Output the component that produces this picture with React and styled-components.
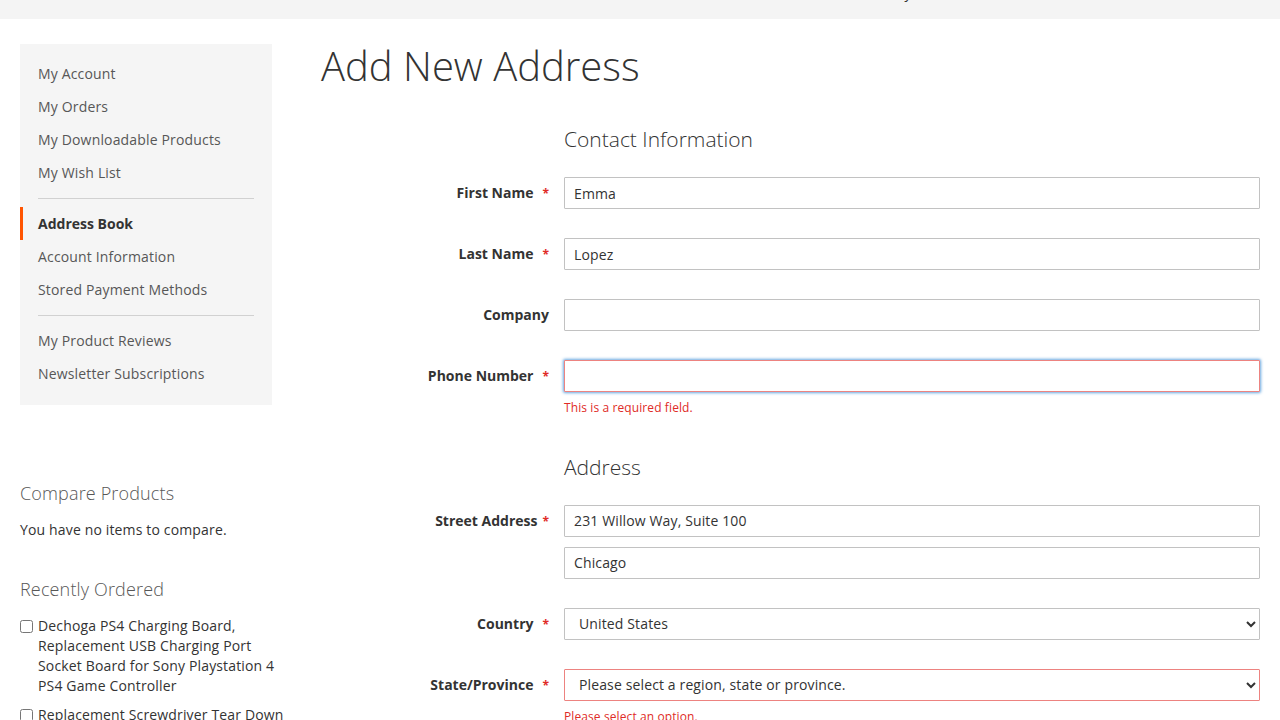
import styled, { createGlobalStyle } from "styled-components";

const GlobalStyle = createGlobalStyle`
  html, body {
    margin: 0;
    padding: 0;
    background: #fff;
  }
  body {
    font-family: "Open Sans", "Liberation Sans", sans-serif;
    font-size: 14px;
    color: #333;
    overflow: hidden;
  }
  * {
    box-sizing: border-box;
  }
`;

const Panel = styled.header`
  height: 19px;
  background: #f4f4f4;
  overflow: hidden;
  display: flex;
  justify-content: flex-end;
  padding-right: 312px;
`;

const PanelLink = styled.a`
  margin-top: -17px;
  font-size: 14px;
  line-height: 20px;
  color: #333;
  text-decoration: none;
`;

const Columns = styled.div`
  display: flex;
  gap: 49px;
  padding: 25px 20px 0;
`;

const Sidebar = styled.aside`
  width: 252px;
  flex-shrink: 0;
`;

const Nav = styled.nav`
  background: #f5f5f5;
  padding: 13px 0 15px;
`;

const NavItem = styled.a`
  display: flex;
  align-items: center;
  height: 33px;
  padding-left: 15px;
  border-left: 3px solid ${(p) => (p.$active ? "#ff5501" : "transparent")};
  color: ${(p) => (p.$active ? "#333" : "#575757")};
  font-weight: ${(p) => (p.$active ? 700 : 400)};
  letter-spacing: ${(p) => (p.$active ? 0 : 0.16)}px;
  font-size: 14px;
  text-decoration: none;
`;

const NavDivider = styled.hr`
  border: 0;
  border-top: 1px solid #d1d1d1;
  margin: 9px 18px 8px;
`;

const Block = styled.section`
  width: 270px;
  margin-top: ${(p) => p.$top}px;
`;

const BlockTitle = styled.h2`
  margin: 0;
  font-size: 18px;
  line-height: 22px;
  font-weight: 300;
  letter-spacing: 0.15px;
  color: #575757;
`;

const BlockText = styled.p`
  margin: 16px 0 0;
  font-size: 14px;
  line-height: 20px;
  letter-spacing: 0.15px;
  color: #333;
`;

const OrderedList = styled.ol`
  list-style: none;
  margin: 16px 0 0;
  padding: 0;
`;

const OrderedItem = styled.li`
  display: flex;
  align-items: flex-start;
  gap: 5px;
  margin-bottom: 9px;
  font-size: 14px;
  line-height: 20px;
  letter-spacing: 0.15px;
  color: #333;
`;

const Check = styled.input`
  width: 13px;
  height: 13px;
  margin: 4px 0 0;
  flex-shrink: 0;
`;

const Main = styled.main`
  flex: 1;
  min-width: 0;
`;

const Title = styled.h1`
  margin: 2px 0 40px;
  font-size: 40px;
  line-height: 40px;
  font-weight: 300;
  color: #333;
`;

const Fieldset = styled.fieldset`
  border: 0;
  margin: 0 0 38px;
  padding: 0;
`;

const Legend = styled.legend`
  padding: 0;
  margin: 0 0 25px 243px;
  font-size: 21px;
  line-height: 26px;
  font-weight: 300;
  color: #333;
`;

const Field = styled.div`
  display: flex;
  margin-bottom: ${(p) => (p.$last ? 0 : 29)}px;
`;

const Label = styled.label`
  width: 243px;
  flex-shrink: 0;
  padding: 6px 15px 0 0;
  text-align: right;
  font-size: 14px;
  line-height: 20px;
  font-weight: 700;
  color: #333;

  ${(p) =>
    p.$required &&
    `
    &::after {
      content: "*";
      color: #e02b27;
      font-size: 12px;
      margin-left: ${p.$tight ? 5 : 9}px;
    }
  `}
`;

const Control = styled.div`
  flex: 1;
  display: flex;
  flex-direction: column;
  gap: 10px;
`;

const Input = styled.input`
  width: 100%;
  height: 32px;
  padding: 0 9px;
  border: 1px solid ${(p) => (p.$error ? "#ed8380" : "#c2c2c2")};
  border-radius: 1px;
  background: #fff;
  font-family: "Open Sans", "Liberation Sans", sans-serif;
  font-size: 14px;
  letter-spacing: 0.13px;
  color: #333;
  outline: none;
  box-shadow: ${(p) => (p.$focus ? "0 0 3px 1px #68a8e0" : "none")};
`;

const Select = styled.select`
  width: 100%;
  height: 32px;
  padding: 0 4px 0 10px;
  border: 1px solid ${(p) => (p.$error ? "#ed8380" : "#c2c2c2")};
  border-radius: 1px;
  background: #fff;
  font-family: "Open Sans", "Liberation Sans", sans-serif;
  font-size: 14px;
  letter-spacing: 0.13px;
  color: #333;
  outline: none;
`;

const ErrorText = styled.div`
  margin-top: -2px;
  font-size: 12px;
  line-height: 15.6px;
  letter-spacing: 0.1px;
  color: #e02b27;
`;

const navGroups = [
  [
    { label: "My Account" },
    { label: "My Orders" },
    { label: "My Downloadable Products" },
    { label: "My Wish List" },
  ],
  [
    { label: "Address Book", active: true },
    { label: "Account Information" },
    { label: "Stored Payment Methods" },
  ],
  [{ label: "My Product Reviews" }, { label: "Newsletter Subscriptions" }],
];

const recentlyOrdered = [
  "Dechoga PS4 Charging Board, Replacement USB Charging Port Socket Board for Sony Playstation 4 PS4 Game Controller",
  "Replacement Screwdriver Tear Down Repair Tool Kit for Game Consoles",
];

function TextField({ label, value, required, error, focus, last }) {
  return (
    <Field $last={last}>
      <Label $required={required}>{label}</Label>
      <Control>
        <Input defaultValue={value} $error={!!error} $focus={focus} />
        {error && <ErrorText>{error}</ErrorText>}
      </Control>
    </Field>
  );
}

export default function App() {
  return (
    <>
      <GlobalStyle />
      <Panel>
        <PanelLink href="#">My Account</PanelLink>
      </Panel>
      <Columns>
        <Sidebar>
          <Nav>
            {navGroups.map((group, i) => (
              <div key={i}>
                {i > 0 && <NavDivider />}
                {group.map((item) => (
                  <NavItem key={item.label} href="#" $active={item.active}>
                    {item.label}
                  </NavItem>
                ))}
              </div>
            ))}
          </Nav>

          <Block $top={77}>
            <BlockTitle>Compare Products</BlockTitle>
            <BlockText>You have no items to compare.</BlockText>
          </Block>

          <Block $top={38}>
            <BlockTitle>Recently Ordered</BlockTitle>
            <OrderedList>
              {recentlyOrdered.map((name) => (
                <OrderedItem key={name}>
                  <Check type="checkbox" />
                  <span>{name}</span>
                </OrderedItem>
              ))}
            </OrderedList>
          </Block>
        </Sidebar>

        <Main>
          <Title>Add New Address</Title>

          <Fieldset>
            <Legend>Contact Information</Legend>
            <TextField label="First Name" value="Emma" required />
            <TextField label="Last Name" value="Lopez" required />
            <TextField label="Company" value="" />
            <TextField
              label="Phone Number"
              value=""
              required
              focus
              error="This is a required field."
              last
            />
          </Fieldset>

          <Fieldset>
            <Legend>Address</Legend>
            <Field>
              <Label $required $tight>
                Street Address
              </Label>
              <Control>
                <Input defaultValue="231 Willow Way, Suite 100" />
                <Input defaultValue="Chicago" />
              </Control>
            </Field>
            <Field>
              <Label $required>Country</Label>
              <Control>
                <Select defaultValue="US">
                  <option value="US">United States</option>
                </Select>
              </Control>
            </Field>
            <Field>
              <Label $required>State/Province</Label>
              <Control>
                <Select $error defaultValue="">
                  <option value="">Please select a region, state or province.</option>
                  <option value="IL">Illinois</option>
                </Select>
                <ErrorText>Please select an option.</ErrorText>
              </Control>
            </Field>
          </Fieldset>
        </Main>
      </Columns>
    </>
  );
}
